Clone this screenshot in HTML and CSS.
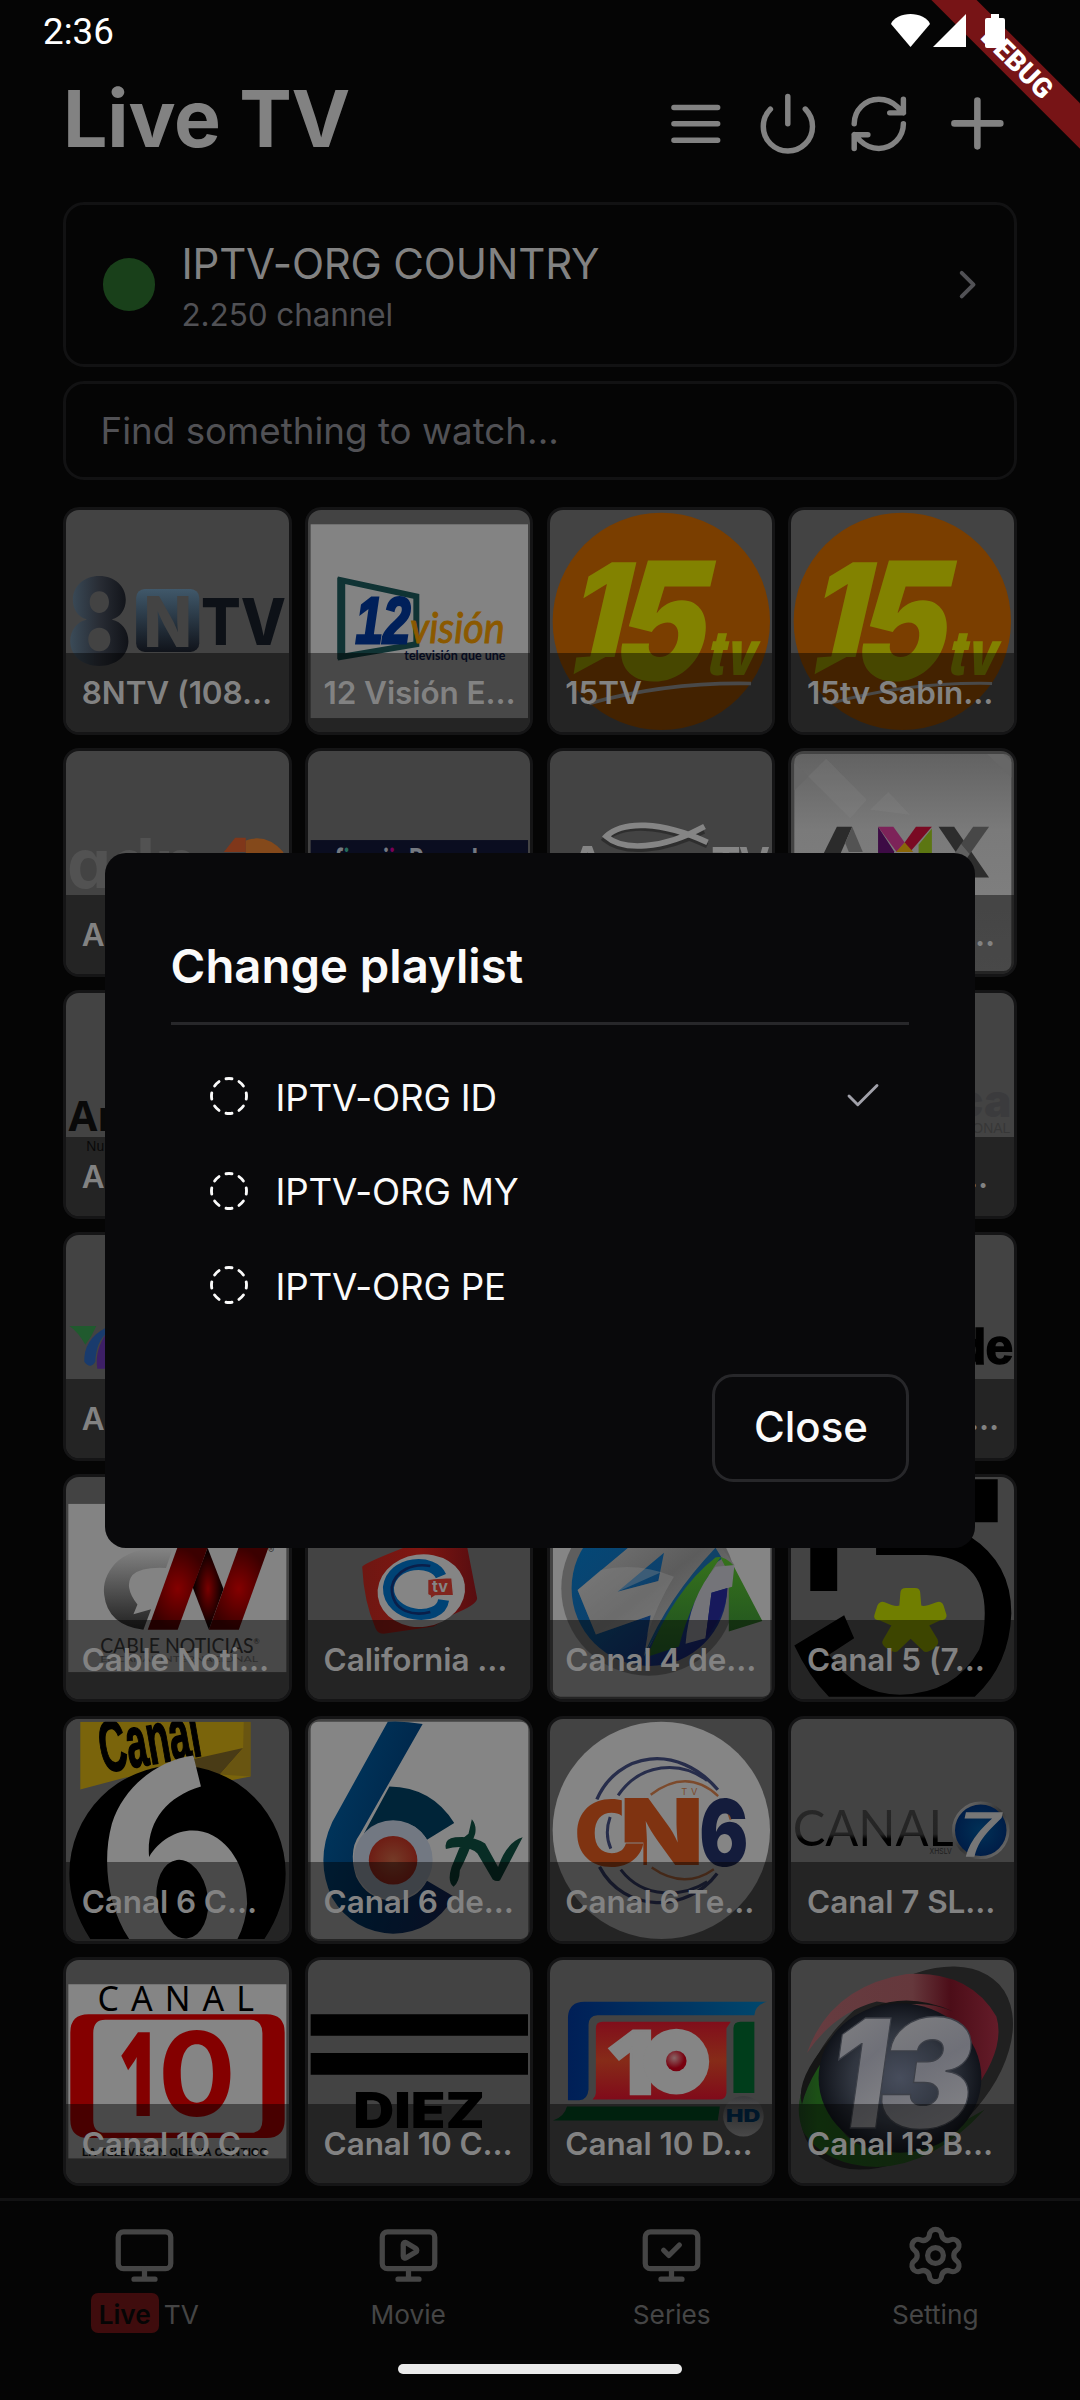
FILE: index.html
```html
<!DOCTYPE html>
<html lang="en">
<head>
<meta charset="utf-8">
<title>Live TV</title>
<link rel="stylesheet" href="styles.css">
</head>
<body>
<div class="screen">
  <div class="ribbon">DEBUG</div>
  <div class="statusbar">
    <span class="clock">2:36</span>
    <svg class="status-icons" width="116" height="36" viewBox="890 13 116 36"><path d="M910.500 47L891 24C893 18 902 14 910.500 14S928 18 930 24Z"/><path d="M966 14V47H933Z"/><path d="M991 14h8v4h4q2 0 2 2v26q0 2-2 2h-16q-2 0-2-2V20q0-2 2-2h4z"/></svg>
  </div>

  <header class="header">
    <h1 class="title">Live TV</h1>
    <div class="actions">
      <svg class="icon" viewBox="0 0 24 24"><path d="M4 6h16M4 12h16M4 18h16"/></svg>
      <svg class="icon" viewBox="0 0 24 24"><path d="M12 2v10M18.400 6.600a9 9 0 1 1-12.770.04"/></svg>
      <svg class="icon" viewBox="0 0 24 24"><path d="M3 12a9 9 0 0 1 9-9 9.750 9.750 0 0 1 6.740 2.740L21 8M21 3v5h-5M21 12a9 9 0 0 1-9 9 9.750 9.750 0 0 1-6.740-2.740L3 16M8 16H3v5"/></svg>
      <svg class="icon icon-plus" viewBox="0 0 24 24"><path d="M5 12h14M12 5v14"/></svg>
    </div>
  </header>

  <main class="main">
    <section class="source">
      <span class="dot"></span>
      <div class="source-text">
        <div class="source-name">IPTV-ORG COUNTRY</div>
        <div class="source-count">2.250 channel</div>
      </div>
      <svg class="chevron" viewBox="0 0 24 24"><path d="m9 18 6-6-6-6"/></svg>
    </section>
    <div class="search">Find something to watch...</div>

    <section class="grid">
      <article class="tile">
        <svg class="logo" viewBox="47 58 670 670">
          <defs>
            <linearGradient id="g8"><stop offset="0" stop-color="#3d4f5d"/><stop offset=".5" stop-color="#282c34"/><stop offset="1" stop-color="#0d0f14"/></linearGradient>
            <linearGradient id="gn" x2="0" y2="1"><stop offset="0" stop-color="#40586a"/><stop offset="1" stop-color="#10131a"/></linearGradient>
          </defs>
          <text class="inter heavy" x="48" y="523" font-size="362" textLength="199" lengthAdjust="spacingAndGlyphs" fill="url(#g8)">8</text>
          <rect x="258" y="296" width="190" height="189" rx="26" fill="url(#gn)"/>
          <text class="inter heavy" x="280" y="470" font-size="212" textLength="146" lengthAdjust="spacingAndGlyphs" fill="#434343">N</text>
          <text class="inter heavy" x="453" y="465" font-size="196" textLength="256" lengthAdjust="spacingAndGlyphs" fill="#0d1117">TV</text>
        </svg>
        <div class="name">8NTV (108…</div>
      </article>
      <article class="tile">
        <svg class="logo" viewBox="772 58 670 670">
          <rect x="780" y="101" width="654" height="583" fill="#838383"/>
          <path d="M871 269L1098 318V462L871 500Z" fill="none" stroke="#103334" stroke-width="18"/>
          <path d="M860 260L884 280V490L860 508Z" fill="#103334"/>
          <text class="lib bold italic" x="915" y="457" font-size="196" textLength="165" lengthAdjust="spacingAndGlyphs" fill="#00205a" stroke="#00205a" stroke-width="9">12</text>
          <text class="lato italic" x="1080" y="459" font-size="126" textLength="284" lengthAdjust="spacingAndGlyphs" fill="#8b5900" stroke="#8b5900" stroke-width="3">visión</text>
          <text class="lato bold" x="1062" y="508" font-size="40" textLength="304" lengthAdjust="spacingAndGlyphs" fill="#0b1539">televisión que une</text>
        </svg>
        <div class="name">12 Visión E…</div>
      </article>
      <article class="tile">
        <svg class="logo" viewBox="27 58 670 670">
          <circle cx="362" cy="393" r="327" fill="#7a3e00"/>
          <g transform="translate(0 495) skewX(-13)"><text class="inter black" x="72" y="5" font-size="392" textLength="168" lengthAdjust="spacingAndGlyphs" fill="#828200">1</text><text class="inter black" x="215" y="74" font-size="494" textLength="280" lengthAdjust="spacingAndGlyphs" fill="#828200">5</text><text class="inter black" x="506" y="58" font-size="186" textLength="146" lengthAdjust="spacingAndGlyphs" fill="#828200">tv</text></g>
          <path d="M106 502L205 494 98 552Z" fill="#828200"/>
          <path d="M145 640Q380 575 632 580" fill="none" stroke="#858585" stroke-width="11"/>
        </svg>
        <div class="name">15TV</div>
      </article>
      <article class="tile">
        <svg class="logo" viewBox="27 58 670 670">
          <circle cx="362" cy="393" r="327" fill="#7a3e00"/>
          <g transform="translate(0 495) skewX(-13)"><text class="inter black" x="72" y="5" font-size="392" textLength="168" lengthAdjust="spacingAndGlyphs" fill="#828200">1</text><text class="inter black" x="215" y="74" font-size="494" textLength="280" lengthAdjust="spacingAndGlyphs" fill="#828200">5</text><text class="inter black" x="506" y="58" font-size="186" textLength="146" lengthAdjust="spacingAndGlyphs" fill="#828200">tv</text></g>
          <path d="M106 502L205 494 98 552Z" fill="#828200"/>
          <path d="M145 640Q380 575 632 580" fill="none" stroke="#858585" stroke-width="9"/>
        </svg>
        <div class="name">15tv Sabin…</div>
      </article>

      <article class="tile">
        <svg class="logo" viewBox="47 783 670 670">
          <text class="inter bold" x="50" y="1194" font-size="205" textLength="396" lengthAdjust="spacingAndGlyphs" fill="#525252">ɑdn</text>
          <path d="M522 1087L556 1044H588V1087Z" fill="#80371a"/>
          <path d="M588 1052Q650 1030 701 1087V1200H588Z" fill="#84491b"/>
        </svg>
        <div class="name">A</div>
      </article>
      <article class="tile">
        <svg class="logo" viewBox="772 783 670 670">
          <rect x="780" y="1051" width="654" height="150" fill="#0a0d20"/>
          <text class="inter bold" x="852" y="1140" font-size="88" textLength="470" lengthAdjust="spacingAndGlyphs" fill="#747981">f<tspan fill="#236a5c">i</tspan>ami<tspan fill="#7a0057">i</tspan>nRecoda</text>
        </svg>
        <div class="name">A…</div>
      </article>
      <article class="tile">
        <svg class="logo" viewBox="27 783 670 670">
          <path d="M490 1024C365 1090 245 1094 192 1050 245 1001 360 1001 500 1068" fill="none" stroke="#222" stroke-opacity=".6" stroke-width="16"/>
          <path d="M492 1010C365 1080 245 1084 196 1040 245 993 360 993 501 1058" fill="none" stroke="#858585" stroke-width="17"/>
          <text class="lib bold" x="82" y="1180" font-size="160" fill="#858585">A</text>
          <text class="lib bold" x="515" y="1180" font-size="158" textLength="172" lengthAdjust="spacingAndGlyphs" fill="#858585">TV</text>
        </svg>
        <div class="name">A…</div>
      </article>
      <article class="tile">
        <svg class="logo" viewBox="752 783 670 670">
          <defs><linearGradient id="ga" x2="0" y2="1"><stop offset="0" stop-color="#626262"/><stop offset=".35" stop-color="#7a7a7a"/><stop offset="1" stop-color="#838383"/></linearGradient></defs>
          <rect x="762" y="792" width="653" height="653" rx="24" fill="url(#ga)"/>
          <path d="M762 820L804 860 762 902ZM1342 792L1415 863V816L1390 792Z" fill="#676767"/>
          <path d="M804 860L858 806 980 930 930 985ZM990 960L1045 906 1110 975Z" fill="#909090" fill-opacity=".18"/>
          <path d="M890 1011H936L880 1140H826Z" fill="#2b2b2b"/><path d="M936 1011L968 1087H926L915 1060Z" fill="#535353"/>
          <path d="M1014 1011V1164H1062V1085Z" fill="#3d0b45"/><path d="M1014 1011H1060L1094 1058 1070 1087Z" fill="#7d2359"/><path d="M1128 1011H1176L1110 1087 1094 1058Z" fill="#7a0a23"/><path d="M1094 1058L1120 1087H1068Z" fill="#8a6608"/><path d="M1176 1016V1164H1136V1065Z" fill="#5c7612"/>
          <path d="M1196 1011H1243L1348 1164H1300Z" fill="#2d2d2d"/><path d="M1300 1011H1348L1290 1093 1264 1062Z" fill="#474747"/><path d="M1264 1062L1290 1093 1240 1164H1196Z" fill="#606060"/>
        </svg>
        <div class="name name-end">…</div>
      </article>

      <article class="tile">
        <svg class="logo" viewBox="65.600 993 223.400 223.400">
          <text class="open bold" x="68" y="1131" font-size="42" fill="#090909">Ar</text>
          <text class="narrow" x="86" y="1152" font-size="14" fill="#111">Nu</text>
        </svg>
        <div class="name">A</div>
      </article>
      <article class="tile"><div class="name">A…</div></article>
      <article class="tile"><div class="name">A…</div></article>
      <article class="tile">
        <svg class="logo" viewBox="791 993 223.400 223.400">
          <text class="inter black" x="1012" y="1117" text-anchor="end" font-size="46" fill="#3b3b3d">Azteca</text>
          <text class="lib" x="1011" y="1133" text-anchor="end" font-size="14" fill="#373737">INTERNACIONAL</text>
        </svg>
        <div class="name name-end-far">…</div>
      </article>

      <article class="tile">
        <svg class="logo" viewBox="65.600 1234.800 223.400 223.400">
          <path d="M69 1326H96Q92 1336 85 1345 78 1332 69 1326Z" fill="#205a2e"/>
          <path d="M105 1328Q83 1340 84 1362 90 1370 95 1362 96 1342 106 1334Z" fill="#193b6d"/>
          <path d="M107 1332Q94 1350 97 1369H110Z" fill="#3d1f66"/>
        </svg>
        <div class="name">A</div>
      </article>
      <article class="tile"><div class="name">B…</div></article>
      <article class="tile"><div class="name">C…</div></article>
      <article class="tile">
        <svg class="logo" viewBox="791 1234.800 223.400 223.400">
          <text class="lib bold" x="1013" y="1364" text-anchor="end" font-size="50" letter-spacing="-1" stroke="#000" stroke-width="1.500">Verde</text>
        </svg>
        <div class="name name-end-near">…</div>
      </article>

      <article class="tile">
        <svg class="logo" viewBox="47 20 670 670">
          <defs>
            <linearGradient id="gc" x2="0" y2="1"><stop offset="0" stop-color="#848484"/><stop offset="1" stop-color="#202020"/></linearGradient>
            <radialGradient id="gr"><stop offset="0" stop-color="#840000"/><stop offset="1" stop-color="#3b0000"/></radialGradient>
            <radialGradient id="gk"><stop offset="0" stop-color="#780000"/><stop offset="1" stop-color="#000"/></radialGradient>
          </defs>
          <rect x="54" y="101" width="656" height="506" fill="#838383"/>
          <path d="M368 235Q250 225 195 280 155 325 162 375 172 465 280 480L303 418 250 433 262 404Q220 350 247 315 275 290 348 294Z" fill="url(#gc)"/>
          <path d="M473 233L521 357 477 480 428 352Z" fill="url(#gk)"/>
          <path d="M382 233H473L383 480H293Z" fill="url(#gr)"/><path d="M566 233H656L567 480H477Z" fill="url(#gr)"/>
          <text class="inter" x="655" y="250" font-size="28" fill="#333">®</text>
          <text class="lato" x="150" y="551" font-size="63" textLength="480" lengthAdjust="spacingAndGlyphs" fill="#2c2c2c">CABLE NOTICIAS<tspan font-size="24" dy="-27">®</tspan></text>
          <text class="lato" x="150" y="577" font-size="20" textLength="475" lengthAdjust="spacingAndGlyphs" fill="#555">EL CANAL INTERNACIONAL</text>
        </svg>
        <div class="name">Cable Noti…</div>
      </article>
      <article class="tile">
        <svg class="logo" viewBox="772 20 670 670">
          <defs><linearGradient id="gq"><stop offset="0" stop-color="#6e1712"/><stop offset=".5" stop-color="#801611"/><stop offset="1" stop-color="#570d10"/></linearGradient></defs>
          <path d="M935 290Q940 280 1060 233L1250 225 1281 385Q1281 405 1205 435L1150 470 1000 492Q982 492 975 475Q940 395 935 290Z" fill="url(#gq)"/>
          <ellipse cx="1113" cy="362" rx="132" ry="109" transform="rotate(-8 1113 362)" fill="#858585"/>
          <path d="M1172 318C1150 265 1025 270 1014 352 1012 445 1170 460 1180 390" fill="none" stroke="#004375" stroke-width="33"/>
          <path d="M1140 288C1090 278 1034 300 1024 352 1024 430 1095 438 1140 426" fill="none" stroke="#0a1f4a" stroke-width="8"/>
          <path d="M1132 331Q1132 326 1205 323L1210 376 1155 378 1140 387V378L1132 374Z" fill="#81251e" stroke="#858585" stroke-width="4"/>
          <text class="inter bold" x="1145" y="367" font-size="46" textLength="48" lengthAdjust="spacingAndGlyphs" fill="#858585">tv</text>
        </svg>
        <div class="name">California …</div>
      </article>
      <article class="tile">
        <svg class="logo" viewBox="27 20 670 670">
          <defs>
            <linearGradient id="g4" x2=".9" y2="1"><stop offset="0" stop-color="#004a7a"/><stop offset=".5" stop-color="#0d416c"/><stop offset="1" stop-color="#17175a"/></linearGradient>
            <linearGradient id="gs" x2="1" y2="1"><stop offset="0" stop-color="#777"/><stop offset=".45" stop-color="#5c5c5c"/><stop offset="1" stop-color="#858585"/></linearGradient>
            <linearGradient id="gv" x2="0" y2="1"><stop offset="0" stop-color="#36721c"/><stop offset="1" stop-color="#1d4d20"/></linearGradient>
          </defs>
          <rect x="36" y="29" width="654" height="652" rx="22" fill="#858585"/>
          <circle cx="324" cy="355" r="263" fill="#5e5e5e"/>
          <ellipse cx="326" cy="355" rx="234" ry="234" fill="url(#g4)"/>
          <path d="M110 360L262 233 230 200H520L582 285Q430 320 310 560L330 436 165 494ZM230 365L353 333 370 248Z" fill="url(#gs)" fill-rule="evenodd"/>
          <path d="M110 360L180 300Q290 275 400 320 350 400 318 500L330 436 165 494ZM230 365L353 333 358 308Z" fill="#858585" fill-opacity=".4" fill-rule="evenodd"/>
          <path d="M525 233L545 265Q445 330 318 540L310 555Q380 385 525 233Z" fill="#104267"/>
          <path d="M540 262Q450 390 415 530L318 562Q400 360 525 262Q550 255 578 285L666 453 565 485V310Z" fill="url(#gv)"/>
          <path d="M525 290L582 285 575 350 513 368 495 505 435 522Q445 385 525 290Z" fill="#747479"/>
          <path d="M513 368L561 354Q558 430 495 505Z" fill="#17195c"/>
        </svg>
        <div class="name">Canal 4 de…</div>
      </article>
      <article class="tile">
        <svg class="logo" viewBox="752 20 670 670">
          <path d="M810 27H1374V156H891V363H810Z"/>
          <path d="M1008 200H1292Q1415 280 1415 430 1410 585 1305 681H866Q805 620 762 527L912 436 942 505 866 555Q950 675 1080 675 1245 672 1318 540 1335 500 1335 430 1335 260 1160 255H1008Z"/>
          <path d="M1081 370Q1081 354 1098 354H1125Q1141 354 1141 370L1144 407Q1155 411 1190 397 1205 392 1211 407L1220 435Q1222 450 1200 452L1168 467 1193 508Q1200 524 1182 536 1162 550 1152 545L1112 507 1072 545Q1060 550 1040 536 1020 522 1030 508L1054 467 1020 452Q998 450 1003 435L1012 407Q1020 392 1034 397 1064 411 1078 407Z" fill="#707e00"/>
        </svg>
        <div class="name">Canal 5 (7…</div>
      </article>

      <article class="tile">
        <svg class="logo" viewBox="47 55 670 670">
          <path d="M90 63H602V228L510 246 230 230 90 267Z" fill="#7a640b"/>
          <path d="M300 205L580 142 510 222 440 250Z" fill="#493b16"/><path d="M582 63H602V228L510 222 580 142Z" fill="#695511"/>
          <g transform="rotate(-10 170 215)"><text class="narrow bold" x="160" y="215" font-size="218" textLength="305" lengthAdjust="spacingAndGlyphs" stroke="#000" stroke-width="5">Canal</text></g>
          <path d="M47 55H717V63H47Z" fill="#434343"/>
          <path d="M120 717Q57 620 57 520A325 325 0 0 1 708 520Q708 620 644 717Z"/>
          <path d="M430 165L453 258C345 290 288 370 297 470 340 400 420 370 490 406 560 445 592 530 592 610Q588 670 563 717H237C172 620 155 480 185 370 220 260 320 180 430 165Z" fill="#858585"/>
          <ellipse cx="397" cy="597" rx="77" ry="119" transform="rotate(-8 397 597)"/>
        </svg>
        <div class="name">Canal 6 C…</div>
      </article>
      <article class="tile">
        <svg class="logo" viewBox="772 55 670 670">
          <defs>
            <linearGradient id="gb" x1="0" y1=".3" x2="1" y2=".8"><stop offset="0" stop-color="#00375e"/><stop offset=".5" stop-color="#00284c"/><stop offset="1" stop-color="#101c41"/></linearGradient>
            <radialGradient id="go"><stop offset="0" stop-color="#743a27"/><stop offset="1" stop-color="#6e1d14"/></radialGradient>
          </defs>
          <rect x="780" y="63" width="655" height="654" rx="22" fill="#858585"/>
          <path d="M1017 258Q1145 260 1212 368L1130 418Q1090 350 1000 370L940 400Z" fill="#002438"/>
          <path d="M1012 63Q1060 60 1117 70L928 402Q892 450 917 530 950 600 1030 602 1100 600 1130 542L1212 590Q1145 700 1028 701 905 695 844 592 792 480 845 365Z" fill="url(#gb)"/>
          <circle cx="1028" cy="479" r="119" fill="#727882"/>
          <circle cx="1028" cy="480" r="73" fill="url(#go)"/>
          <path d="M1265 357Q1280 375 1275 400 1255 460 1229 510 1228 545 1210 560 1190 545 1204 500L1240 412 1255 400ZM1187 446Q1180 415 1215 411 1270 405 1305 430L1344 500Q1370 425 1418 411L1350 540Q1340 546 1328 538L1282 460Q1250 430 1187 446Z" fill="#082d25"/>
        </svg>
        <div class="name">Canal 6 de…</div>
      </article>
      <article class="tile">
        <svg class="logo" viewBox="27 55 670 670">
          <defs><clipPath id="cn"><path d="M240 280H490V510H308V427H240Z"/></clipPath></defs>
          <circle cx="362" cy="390" r="327" fill="#858585"/>
          <path d="M168 297C230 155 410 125 532 268M176 500C250 640 440 640 530 520" fill="none" stroke="#272d4b" stroke-width="10"/>
          <path d="M232 285C300 185 420 180 500 240M240 508C310 600 430 590 500 545M208 350Q190 400 210 445" fill="none" stroke="#272d4b" stroke-width="9"/>
          <path d="M330 283Q440 200 533 287M333 502Q430 570 520 507M563 335L571 358" fill="none" stroke="#7c4a2c" stroke-width="7"/>
          <text class="inter heavy" x="97" y="496" font-size="275" textLength="222" lengthAdjust="spacingAndGlyphs" fill="#7f3311">C</text>
          <path d="M243 285H312V430H243Z" fill="#858585"/>
          <g clip-path="url(#cn)"><text class="inter black" x="236" y="494" font-size="278" textLength="254" lengthAdjust="spacingAndGlyphs" fill="#7f3311">N</text></g>
          <text class="inter black" x="476" y="498" font-size="278" textLength="148" lengthAdjust="spacingAndGlyphs" fill="#141c3c">6</text>
          <text class="inter" x="422" y="285" font-size="28" letter-spacing="11" fill="#7c4a2c">TV</text>
        </svg>
        <div class="name">Canal 6 Te…</div>
      </article>
      <article class="tile">
        <svg class="logo" viewBox="752 55 670 670">
          <defs>
            <linearGradient id="g7" x2="0" y2="1"><stop offset="0" stop-color="#292929"/><stop offset=".62" stop-color="#242424"/><stop offset=".7" stop-color="#000"/></linearGradient>
            <radialGradient id="g7b"><stop offset="0" stop-color="#003157"/><stop offset="1" stop-color="#001c46"/></radialGradient>
            <linearGradient id="g7c" x2="1" y2="1"><stop offset="0" stop-color="#777"/><stop offset=".5" stop-color="#333"/><stop offset="1" stop-color="#777"/></linearGradient>
          </defs>
          <text class="lato" x="757" y="438" font-size="152" textLength="484" lengthAdjust="spacingAndGlyphs" fill="url(#g7)">CANAL</text>
          <text class="inter" x="1169" y="461" font-size="24" textLength="67" lengthAdjust="spacingAndGlyphs" fill="#202020">XHSLV</text>
          <circle cx="1323" cy="390" r="82" fill="url(#g7b)" stroke="url(#g7c)" stroke-width="9"/>
          <text class="lib italic" x="1254" y="468" font-size="190" textLength="126" lengthAdjust="spacingAndGlyphs" fill="#777" stroke="#777" stroke-width="4">7</text>
        </svg>
        <div class="name">Canal 7 SL…</div>
      </article>

      <article class="tile">
        <svg class="logo" viewBox="47 780 670 670">
          <rect x="54" y="853" width="656" height="524" fill="#858585"/>
          <text class="noto" x="142" y="934" font-size="102" letter-spacing="39" fill="#000" textLength="510">CANAL</text>
          <path fill-rule="evenodd" d="M115 943H650Q705 943 705 998V1260Q705 1316 650 1316H115Q60 1316 60 1260V998Q60 943 115 943ZM165 960Q129 960 129 1000V1262Q129 1300 165 1300H602Q638 1300 638 1262V1000Q638 960 602 960Z" fill="#840000"/>
          <text class="open heavy" x="205" y="1248" font-size="352" textLength="120" lengthAdjust="spacingAndGlyphs" fill="#840000">1</text>
          <text class="inter bold" x="324" y="1248" font-size="350" textLength="234" lengthAdjust="spacingAndGlyphs" fill="#840000">0</text>
          <text class="inter bold" x="95" y="1370" font-size="32" textLength="560" lengthAdjust="spacingAndGlyphs" fill="#111">LA TELEVISIÓN QUE VA CONTIGO</text>
        </svg>
        <div class="name">Canal 10 C…</div>
      </article>
      <article class="tile">
        <svg class="logo" viewBox="772 780 670 670">
          <path d="M780 943h654v65H780zM780 1060h654v65H780z"/>
          <text class="inter black" x="908" y="1285" font-size="148" textLength="396" lengthAdjust="spacingAndGlyphs">DIEZ</text>
        </svg>
        <div class="name">Canal 10 C…</div>
      </article>
      <article class="tile">
        <svg class="logo" viewBox="27 780 670 670">
          <defs>
            <linearGradient id="gx"><stop offset="0" stop-color="#001f57"/><stop offset="1" stop-color="#00486d"/></linearGradient>
            <linearGradient id="gy" x2="0" y2="1"><stop offset="0" stop-color="#810e1b"/><stop offset=".5" stop-color="#862b18"/><stop offset="1" stop-color="#800a1a"/></linearGradient>
            <radialGradient id="gz" cx=".4" cy=".35"><stop offset="0" stop-color="#866"/><stop offset="1" stop-color="#78000f"/></radialGradient>
            <linearGradient id="gh" x2="0" y2="1"><stop offset="0" stop-color="#3a3a3c"/><stop offset="1" stop-color="#858585"/></linearGradient>
          </defs>
          <path d="M81 950Q85 906 130 906H680Q645 915 642 946H170Q143 948 143 975V1170Q140 1202 115 1202H81Z" fill="url(#gx)"/>
          <path d="M579 985Q580 966 600 966H642V1180H579ZM78 1221H538L532 1263H36Q70 1252 78 1221Z" fill="#003d1b"/>
          <path d="M165 985Q165 966 185 966H571L558 985V1180Q556 1200 535 1200H155Q165 1190 165 1180Z" fill="url(#gy)"/>
          <text class="open heavy" x="194" y="1183" font-size="268" textLength="170" lengthAdjust="spacingAndGlyphs" fill="#858585" stroke="#858585" stroke-width="7">1</text>
          <circle cx="407" cy="1086" r="99" fill="#858585"/>
          <circle cx="407" cy="1084" r="31" fill="url(#gz)"/>
          <circle cx="609" cy="1250" r="61" fill="url(#gh)"/>
          <text class="inter black" x="557" y="1269" font-size="51" textLength="103" lengthAdjust="spacingAndGlyphs" fill="#002b4e">HD</text>
        </svg>
        <div class="name">Canal 10 D…</div>
      </article>
      <article class="tile">
        <svg class="logo" viewBox="752 780 670 670">
          <defs>
            <radialGradient id="gm"><stop offset="0" stop-color="#474d5c"/><stop offset=".6" stop-color="#30353f"/><stop offset="1" stop-color="#10131a"/></radialGradient>
            <linearGradient id="gp"><stop offset="0" stop-color="#663c40"/><stop offset=".55" stop-color="#65383c"/><stop offset=".75" stop-color="#4c0d18"/><stop offset="1" stop-color="#641c29"/></linearGradient>
            <linearGradient id="gt" x2=".3" y2="1"><stop offset="0" stop-color="#858585"/><stop offset=".55" stop-color="#6f7078"/><stop offset="1" stop-color="#858588"/></linearGradient>
            <linearGradient id="ge"><stop offset="0" stop-color="#1b3d1b"/><stop offset=".1" stop-color="#1c5016"/><stop offset="1" stop-color="#213c1d"/></linearGradient>
          </defs>
          <ellipse cx="1100" cy="1105" rx="375" ry="235" transform="rotate(-42 1100 1105)" fill="#202020"/>
          <path d="M800 1060Q870 860 1100 822 1290 810 1370 950 1400 1050 1290 1190L1240 1020Q1150 920 1010 905 880 940 800 1060Z" fill="url(#gp)"/>
          <path d="M858 1065Q740 1180 790 1300 860 1400 1010 1403 1180 1400 1335 1230L1120 1350Q840 1400 858 1065Z" fill="url(#ge)"/>
          <path d="M785 1215Q760 1130 900 985 1050 850 1240 935 1080 870 920 995 810 1110 785 1215Z" fill="#151515"/>
          <ellipse cx="1080" cy="1135" rx="245" ry="225" fill="url(#gm)"/>
          <g transform="translate(0 1287) skewX(-8)"><text class="inter black" x="850" y="0" font-size="455" textLength="175" lengthAdjust="spacingAndGlyphs" fill="url(#gt)" stroke="#3d4048" stroke-width="4">1</text><text class="inter black" x="996" y="0" font-size="455" textLength="290" lengthAdjust="spacingAndGlyphs" fill="url(#gt)" stroke="#3d4048" stroke-width="4">3</text></g>
        </svg>
        <div class="name">Canal 13 B…</div>
      </article>
    </section>
  </main>

  <nav class="nav">
    <div class="nav-item">
      <svg class="nav-icon" viewBox="0 0 24 24"><rect x="2" y="3" width="20" height="14" rx="2"/><path d="M8 21h8M12 17v4"/></svg>
      <div class="nav-label"><span class="live">Live</span><span>TV</span></div>
    </div>
    <div class="nav-item">
      <svg class="nav-icon" viewBox="0 0 24 24"><path d="M10 7.750a.75.75 0 0 1 1.142-.638l3.664 2.249a.75.75 0 0 1 0 1.278l-3.664 2.250a.75.75 0 0 1-1.142-.64z"/><rect x="2" y="3" width="20" height="14" rx="2"/><path d="M8 21h8M12 17v4"/></svg>
      <div class="nav-label">Movie</div>
    </div>
    <div class="nav-item">
      <svg class="nav-icon" viewBox="0 0 24 24"><path d="m9 10 2 2 4-4"/><rect x="2" y="3" width="20" height="14" rx="2"/><path d="M8 21h8M12 17v4"/></svg>
      <div class="nav-label">Series</div>
    </div>
    <div class="nav-item">
      <svg class="nav-icon" viewBox="0 0 24 24"><path d="M9.671 4.136a2.340 2.340 0 0 1 4.659 0 2.340 2.340 0 0 0 3.319 1.915 2.340 2.340 0 0 1 2.330 4.033 2.340 2.340 0 0 0 0 3.831 2.340 2.340 0 0 1-2.330 4.033 2.340 2.340 0 0 0-3.319 1.915 2.340 2.340 0 0 1-4.659 0 2.340 2.340 0 0 0-3.320-1.915 2.340 2.340 0 0 1-2.330-4.033 2.340 2.340 0 0 0 0-3.831A2.340 2.340 0 0 1 6.350 6.051a2.340 2.340 0 0 0 3.319-1.915"/><circle cx="12" cy="12" r="3"/></svg>
      <div class="nav-label">Setting</div>
    </div>
  </nav>
  <div class="home-bar"></div>

  <div class="overlay">
    <div class="dialog" role="dialog">
      <h2 class="dialog-title">Change playlist</h2>
      <div class="option"><svg class="option-icon" viewBox="0 0 24 24"><circle cx="12" cy="12" r="10" pathLength="80"/></svg><span>IPTV-ORG ID</span><svg class="check" viewBox="0 0 24 24"><path d="M20 6 9 17l-5-5"/></svg></div>
      <div class="option"><svg class="option-icon" viewBox="0 0 24 24"><circle cx="12" cy="12" r="10" pathLength="80"/></svg><span>IPTV-ORG MY</span></div>
      <div class="option"><svg class="option-icon" viewBox="0 0 24 24"><circle cx="12" cy="12" r="10" pathLength="80"/></svg><span>IPTV-ORG PE</span></div>
      <button class="close">Close</button>
    </div>
  </div>
</div>
</body>
</html>
```
FILE: styles.css
```css
* { box-sizing: border-box; }
body { margin: 0; background: #050505; font-family: Inter, "Liberation Sans", sans-serif; color: #828282; }
.screen { position: relative; width: 1080px; height: 2400px; overflow: hidden; display: flex; flex-direction: column; }

/* status bar and debug ribbon */
.ribbon { position: absolute; left: 867.300px; top: 46.700px; width: 300px; height: 32px; transform: rotate(45deg); background: #771416; color: #fff; text-align: center; font: 900 27.500px/32px Roboto, sans-serif; }
.statusbar { position: relative; height: 63px; flex: none; display: flex; justify-content: space-between; padding: 13px 74px 0 43px; color: #fff; }
.clock { font: 400 36.750px/37px Roboto, sans-serif; }
.status-icons { fill: #fff; }

.header { height: 121px; flex: none; display: flex; justify-content: space-between; align-items: center; padding: 0 63px; }
.title { margin: 0; padding-bottom: 9px; font-size: 78.750px; line-height: 90px; font-weight: 700; letter-spacing: -.2px; }
.actions { display: flex; align-items: center; gap: 26.200px; }
.icon { width: 65.600px; height: 65.600px; fill: none; stroke: #828282; stroke-width: 2; stroke-linecap: round; stroke-linejoin: round; }
.icon-plus { width: 78.750px; height: 78.750px; }

/* content */
.main { flex: 1; padding: 18px 63px 0; }
.source { height: 165.400px; display: flex; align-items: center; padding: 0 23px 0 36.500px; border: 3px solid #121213; border-radius: 21px; }
.dot { width: 52.500px; height: 52.500px; border-radius: 50%; background: #19401a; margin-right: 26.500px; }
.source-text { flex: 1; }
.source-name { font-size: 42px; line-height: 59px; letter-spacing: -.2px; }
.source-count { font-size: 31.500px; line-height: 43px; letter-spacing: -.1px; color: #515155; }
.chevron { width: 47.250px; height: 47.250px; fill: none; stroke: #515155; stroke-width: 2; stroke-linecap: round; stroke-linejoin: round; }
.search { height: 99.800px; margin-top: 13.200px; padding-left: 34.500px; border: 3px solid #121213; border-radius: 21px; font-size: 36.750px; line-height: 94px; color: #515155; }

.grid { margin-top: 26.300px; display: grid; grid-template-columns: repeat(4, 1fr); gap: 13.130px; }
.tile { position: relative; height: 228.660px; border: 3px solid #151516; border-radius: 16px; background: #434343; overflow: hidden; display: flex; align-items: flex-end; }
.logo { position: absolute; inset: 0; width: 100%; height: 100%; }
.name { position: relative; width: 100%; height: 79px; padding: 2px 0 0 15.750px; background: rgba(0, 0, 0, .45); font-size: 31.500px; line-height: 76px; font-weight: 600; letter-spacing: -.1px; white-space: nowrap; overflow: hidden; }
.name-end, .name-end-near, .name-end-far { text-align: right; padding-right: 19px; }
.name-end-near { padding-right: 15px; }
.name-end-far { padding-right: 26px; }

/* lettering inside channel logos */
.inter { font-family: Inter, sans-serif; }
.lib { font-family: "Liberation Sans", sans-serif; }
.lato { font-family: Lato, sans-serif; }
.open { font-family: "Open Sans", sans-serif; }
.noto { font-family: "Noto Sans", sans-serif; }
.narrow { font-family: "Liberation Sans Narrow", "Liberation Sans", sans-serif; }
.bold { font-weight: 700; }
.heavy { font-weight: 800; }
.black { font-weight: 900; }
.italic { font-style: italic; }

/* bottom navigation */
.nav { flex: none; height: 202px; display: grid; grid-template-columns: repeat(4, 1fr); padding: 23px 13px 0; border-top: 3px solid #121213; }
.nav-item { display: flex; flex-direction: column; align-items: center; color: #454545; }
.nav-icon { width: 63px; height: 63px; fill: none; stroke: #454545; stroke-width: 2; stroke-linecap: round; stroke-linejoin: round; }
.nav-label { display: flex; gap: 5px; margin-top: 6px; font-size: 26.250px; line-height: 43px; }
.live { height: 40px; line-height: 43px; padding: 0 8px; border-radius: 7px; background: #3f0c0d; color: #050505; font-weight: 600; }
.home-bar { position: absolute; left: 398px; bottom: 26px; width: 284px; height: 10px; border-radius: 5px; background: #ebebeb; }

/* playlist dialog */
.overlay { position: absolute; inset: 0; display: flex; align-items: center; justify-content: center; }
.dialog { width: 870px; height: 695px; padding: 65.600px; border-radius: 21px; background: #09090b; color: #fafafa; display: flex; flex-direction: column; }
.dialog-title { margin: 0 0 25px; height: 107px; border-bottom: 3px solid #27272a; font-size: 47.250px; line-height: 96px; font-weight: 600; }
.option { display: flex; align-items: center; height: 94.500px; padding: 0 25.500px 0 37.500px; font-size: 36.750px; letter-spacing: -.2px; }
.option-icon, .check { width: 42px; height: 42px; margin-bottom: 2px; fill: none; stroke: #fafafa; stroke-width: 1.650; stroke-linecap: round; stroke-linejoin: round; }
.option-icon { margin-right: 25.500px; stroke-dasharray: 4.500 5.500; stroke-dashoffset: 2.250; }
.check { margin-left: auto; stroke: #a1a1aa; }
.close { margin: auto 0 0 auto; width: 197px; height: 108px; border: 3px solid #27272a; border-radius: 21px; background: none; color: #fafafa; font: 500 42px Inter, sans-serif; padding: 0 0 2px; }
```
